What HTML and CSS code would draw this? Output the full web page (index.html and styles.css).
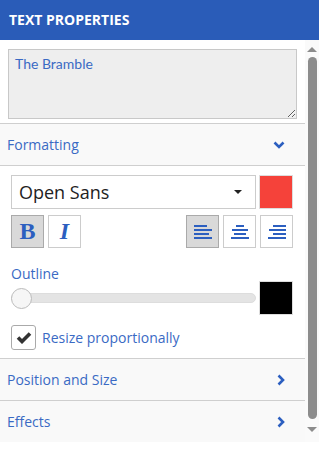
FILE: index.html
```html
<!DOCTYPE html>
<html>
	<head>
		<meta charset="utf-8">
		<title>Text properties</title>
		<link rel="stylesheet" href="styles.css">
	</head>
	<body>
		<div id="props">
			<div class="props-title">TEXT PROPERTIES</div>
			<div class="props-body">
				<div class="props-content">
					<div class="text-box">
						<textarea class="text-input">The Bramble</textarea>
					</div>

					<div class="section-head">
						<span>Formatting</span>
						<svg class="chev" width="12" height="8" viewBox="0 0 12 8"><path d="M1.5 1.5 L6 6 L10.5 1.5" fill="none" stroke="#2c5fc0" stroke-width="2.6"/></svg>
					</div>
					<div class="section-body">
						<div class="row">
							<div class="font-select">
								<span>Open Sans</span>
								<span class="caret"></span>
							</div>
							<div class="swatch red"></div>
						</div>
						<div class="row btn-row">
							<div class="btn-group">
								<div class="tbtn active bold">B</div>
								<div class="tbtn italic">I</div>
							</div>
							<div class="btn-group">
								<div class="tbtn active">
									<svg width="18" height="14" viewBox="0 0 18 14"><rect x="0" y="0" width="13" height="2"/><rect x="0" y="4" width="18" height="2"/><rect x="0" y="8" width="15" height="2"/><rect x="0" y="12" width="19" height="2"/></svg>
								</div>
								<div class="tbtn">
									<svg width="18" height="14" viewBox="0 0 18 14"><rect x="5" y="0" width="8" height="2"/><rect x="1" y="4" width="16" height="2"/><rect x="3" y="8" width="12" height="2"/><rect x="0" y="12" width="19" height="2"/></svg>
								</div>
								<div class="tbtn">
									<svg width="18" height="14" viewBox="0 0 18 14"><rect x="5" y="0" width="13" height="2"/><rect x="1" y="4" width="17" height="2"/><rect x="5" y="8" width="13" height="2"/><rect x="0" y="12" width="18" height="2"/></svg>
								</div>
							</div>
						</div>
						<div class="label">Outline</div>
						<div class="row slider-row">
							<div class="slider"><div class="knob"></div></div>
							<div class="swatch black"></div>
						</div>
						<div class="check-row">
							<div class="check">
								<svg width="16" height="13" viewBox="0 0 16 13"><path d="M2 6.5 L6 10.5 L14 2.5" fill="none" stroke="#333" stroke-width="3.6"/></svg>
							</div>
							<span>Resize proportionally</span>
						</div>
					</div>

					<div class="section-head">
						<span>Position and Size</span>
						<svg class="chev" width="8" height="12" viewBox="0 0 8 12"><path d="M1.5 1.5 L6 6 L1.5 10.5" fill="none" stroke="#2c5fc0" stroke-width="2.6"/></svg>
					</div>
					<div class="section-head last">
						<span>Effects</span>
						<svg class="chev" width="8" height="12" viewBox="0 0 8 12"><path d="M1.5 1.5 L6 6 L1.5 10.5" fill="none" stroke="#2c5fc0" stroke-width="2.6"/></svg>
					</div>
				</div>
				<div class="scrollbar">
					<div class="arrow up"></div>
					<div class="thumb"></div>
					<div class="arrow down"></div>
				</div>
			</div>
		</div>
	</body>
</html>
```

FILE: styles.css
```css
body {
  margin: 0;
  background: #fff;
  font-family: "Open Sans", "Lato", sans-serif;
}

#props {
  width: 319px;
}

.props-title {
  height: 40px;
  background: #2a5cb8;
  color: #fff;
  font-weight: 700;
  font-size: 14px;
  line-height: 40px;
  padding-left: 9px;
}

.props-body {
  display: flex;
  background: #f9f9f9;
}

.props-content {
  width: 305px;
}

/*** text box **/

.text-box {
  background: #fff;
  padding: 9px 8px 4px 8px;
  border-bottom: 1px solid #cfcfcf;
}

.text-input {
  display: block;
  box-sizing: border-box;
  width: 289px;
  height: 70px;
  margin: 0;
  padding: 5px 6px;
  background: #eee;
  border: 1px solid #c8c8c8;
  border-radius: 0;
  resize: vertical;
  color: #3a6ac4;
  font-family: "Lato", sans-serif;
  font-size: 14px;
  outline: none;
}

/*** sections **/

.section-head {
  display: flex;
  align-items: center;
  justify-content: space-between;
  height: 41px;
  padding: 0 20px 0 7px;
  background: #f9f9f9;
  border-bottom: 1px solid #cfcfcf;
  color: #3a6ac4;
  font-size: 14px;
}

.section-head.last {
  border-bottom: none;
}

.section-body {
  background: #fff;
  padding: 9px 11px 8px 11px;
  border-bottom: 1px solid #cfcfcf;
}

.row {
  display: flex;
  justify-content: space-between;
  align-items: center;
  width: 282px;
}

.font-select {
  box-sizing: border-box;
  width: 245px;
  height: 34px;
  border: 1px solid #ccc;
  display: flex;
  align-items: center;
  justify-content: space-between;
  padding: 0 13px 0 7px;
  font-family: "Open Sans", sans-serif;
  font-size: 18px;
  color: #222;
}

.caret {
  width: 0;
  height: 0;
  border-left: 4px solid transparent;
  border-right: 4px solid transparent;
  border-top: 4px solid #222;
}

.swatch {
  box-sizing: border-box;
  width: 34px;
  height: 34px;
  border: 1px solid #ddd;
}

.swatch.red {
  background: #f5423a;
}

.swatch.black {
  background: #000;
}

.btn-row {
  margin-top: 6px;
}

.btn-group {
  display: flex;
  gap: 4px;
}

.tbtn {
  box-sizing: border-box;
  width: 33px;
  height: 33px;
  border: 1px solid #ccc;
  background: #fff;
  display: flex;
  align-items: center;
  justify-content: center;
  color: #2c5fc0;
  font-family: "Liberation Serif", serif;
  font-size: 24px;
}

.tbtn svg {
  fill: #2c5fc0;
}

.tbtn.active {
  background: #d9d9d9;
  border-color: #aaa;
}

.tbtn.bold {
  font-weight: 700;
}

.tbtn.italic {
  font-style: italic;
  font-weight: 700;
}

.label {
  margin-top: 16px;
  color: #3a6ac4;
  font-size: 14px;
}

.slider-row {
  margin-top: -2px;
}

.slider {
  position: relative;
  box-sizing: border-box;
  width: 245px;
  height: 10px;
  background: #e4e4e4;
  border: 1px solid #ddd;
  border-radius: 5px;
}

.knob {
  position: absolute;
  left: -1px;
  top: -6px;
  box-sizing: border-box;
  width: 21px;
  height: 21px;
  border-radius: 50%;
  background: #f6f6f6;
  border: 1px solid #bbb;
}

.check-row {
  display: flex;
  align-items: center;
  gap: 6px;
  margin-top: 10px;
  color: #3a6ac4;
  font-size: 14px;
}

.check {
  box-sizing: border-box;
  width: 25px;
  height: 25px;
  border: 1px solid #aaa;
  border-radius: 3px;
  display: flex;
  align-items: center;
  justify-content: center;
}

/*** scrollbar **/

.scrollbar {
  width: 14px;
  display: flex;
  flex-direction: column;
  align-items: center;
  background: #fafafa;
}

.arrow {
  width: 0;
  height: 0;
  border-left: 5px solid transparent;
  border-right: 5px solid transparent;
}

.arrow.up {
  margin-top: 7px;
  border-bottom: 5px solid #8c8c8c;
}

.arrow.down {
  margin-top: 8px;
  border-top: 5px solid #8c8c8c;
}

.thumb {
  margin-top: 5px;
  width: 9px;
  height: 362px;
  border-radius: 5px;
  background: #8c8c8c;
}
```
